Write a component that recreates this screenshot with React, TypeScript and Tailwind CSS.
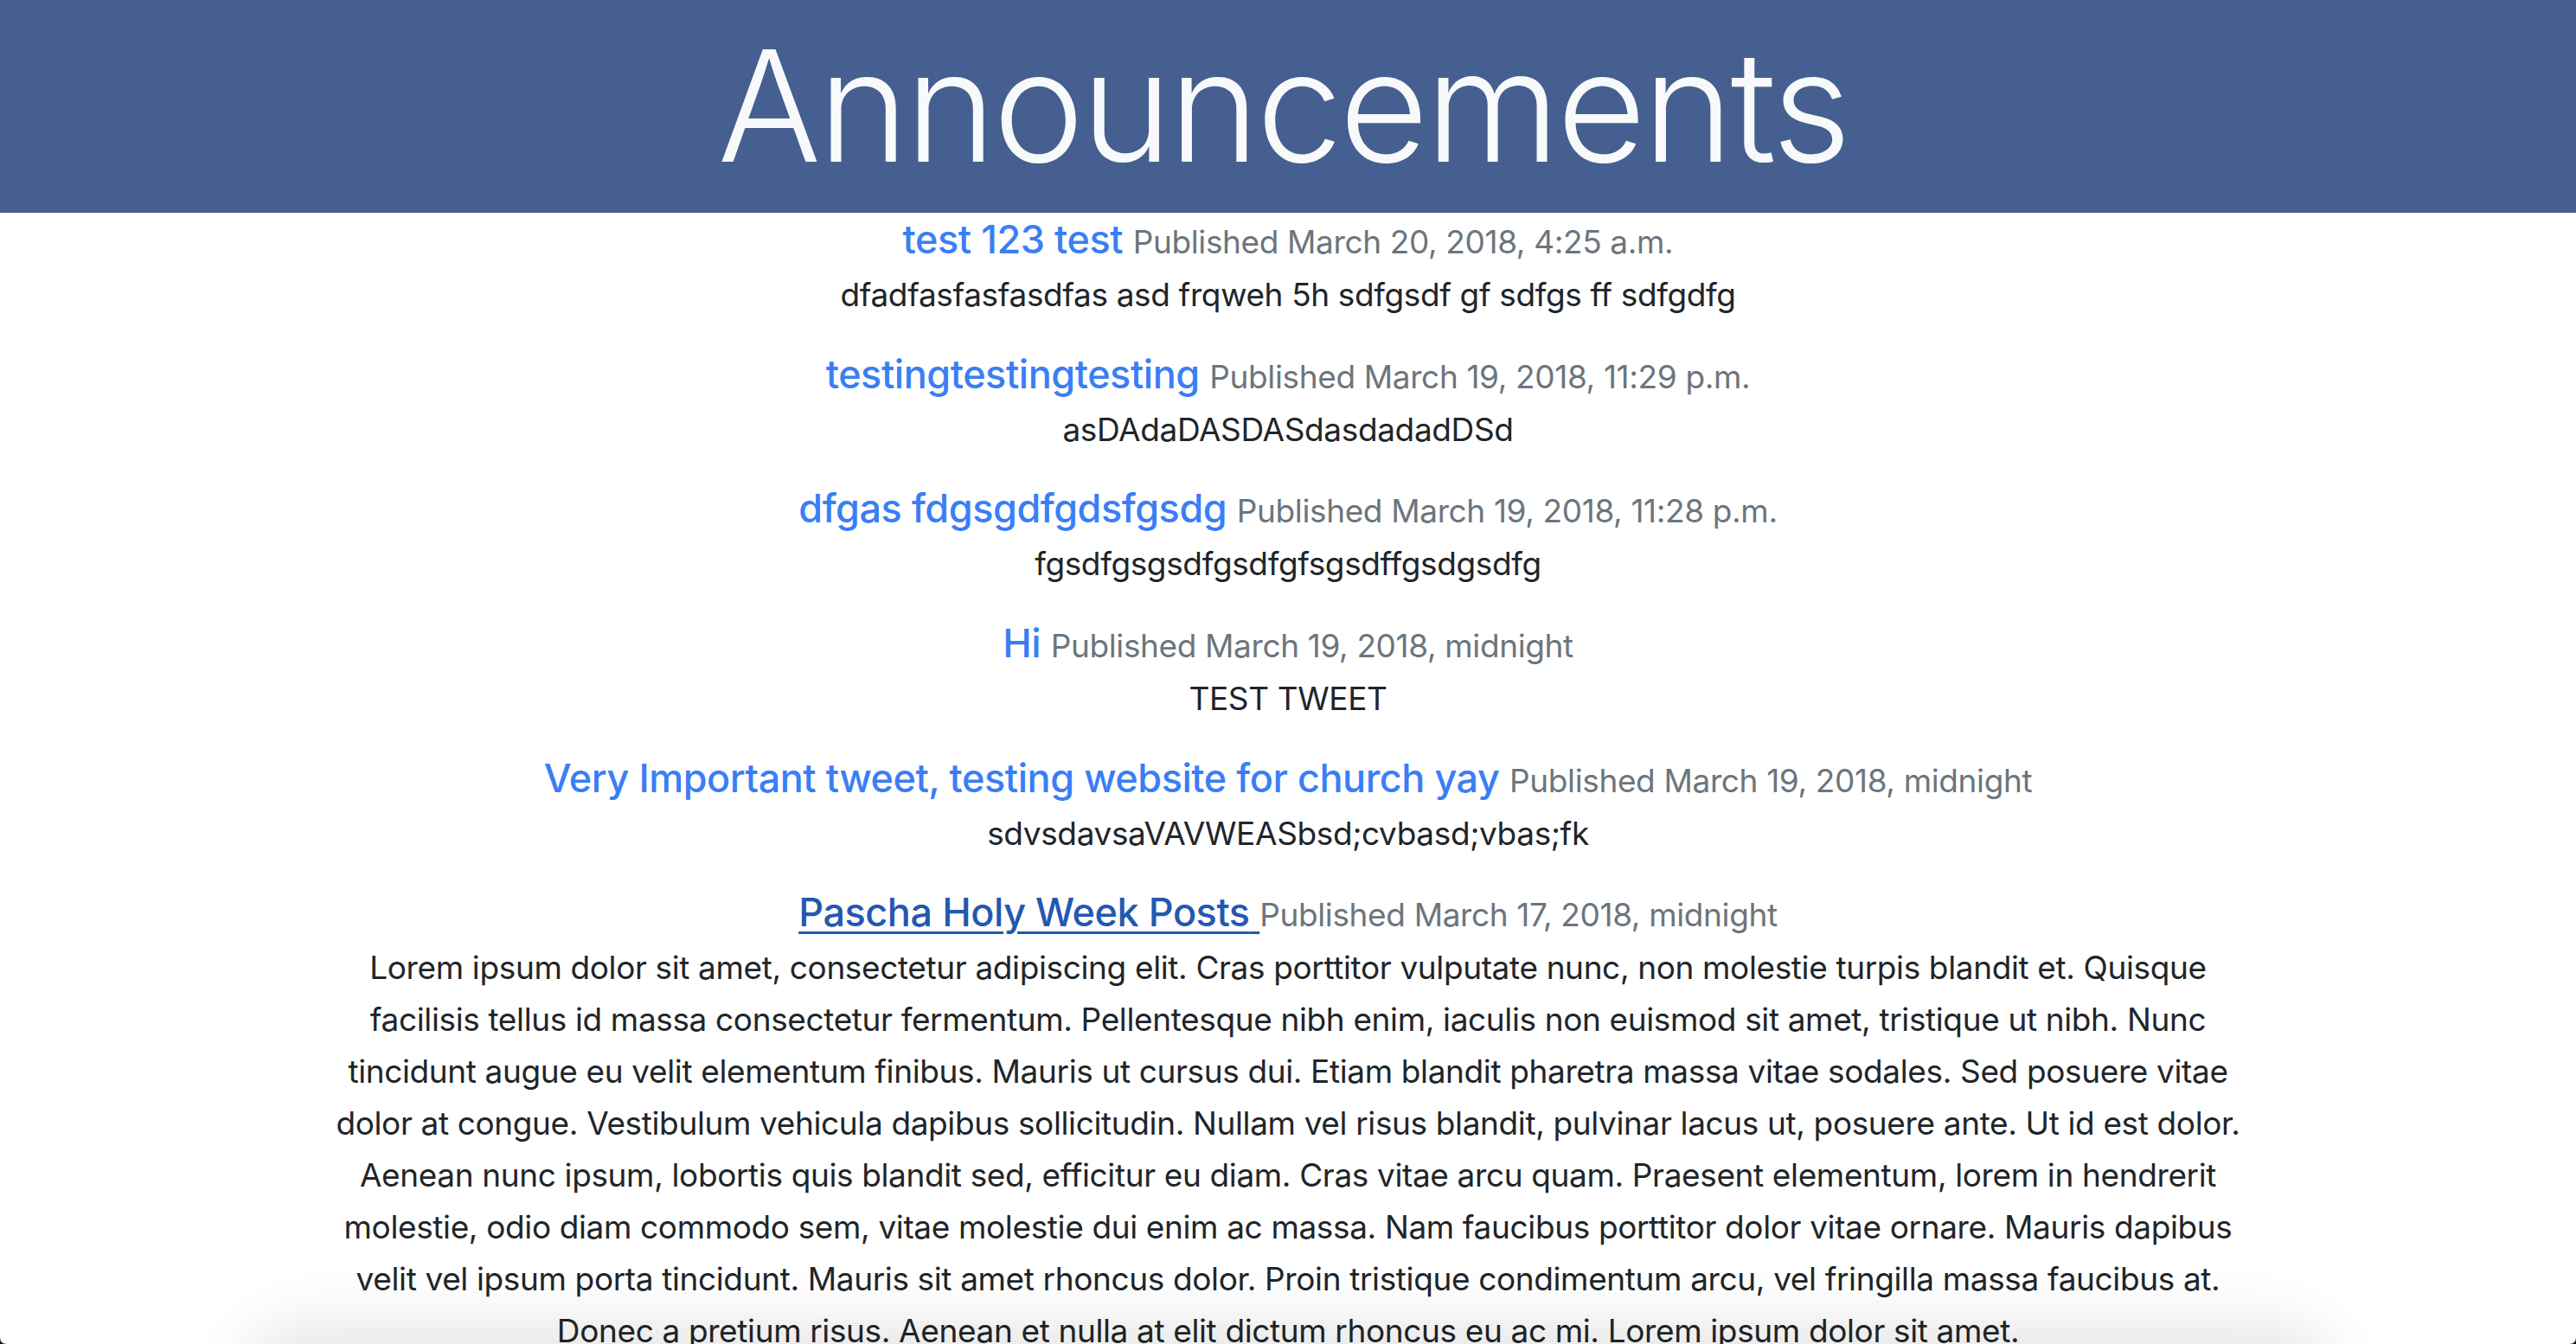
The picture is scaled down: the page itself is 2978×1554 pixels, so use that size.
import React from "react";

type Entry = { title: string; date: string; body: string[]; hover?: boolean };

const entries: Entry[] = [
  { title: "test 123 test", date: "Published March 20, 2018, 4:25 a.m.", body: ["dfadfasfasfasdfas asd frqweh 5h sdfgsdf gf sdfgs ff sdfgdfg"] },
  { title: "testingtestingtesting", date: "Published March 19, 2018, 11:29 p.m.", body: ["asDAdaDASDASdasdadadDSd"] },
  { title: "dfgas fdgsgdfgdsfgsdg", date: "Published March 19, 2018, 11:28 p.m.", body: ["fgsdfgsgsdfgsdfgfsgsdffgsdgsdfg"] },
  { title: "Hi", date: "Published March 19, 2018, midnight", body: ["TEST TWEET"] },
  { title: "Very Important tweet, testing website for church yay", date: "Published March 19, 2018, midnight", body: ["sdvsdavsaVAVWEASbsd;cvbasd;vbas;fk"] },
  {
    title: "Pascha Holy Week Posts",
    date: "Published March 17, 2018, midnight",
    hover: true,
    body: [
      "Lorem ipsum dolor sit amet, consectetur adipiscing elit. Cras porttitor vulputate nunc, non molestie turpis blandit et. Quisque",
      "facilisis tellus id massa consectetur fermentum. Pellentesque nibh enim, iaculis non euismod sit amet, tristique ut nibh. Nunc",
      "tincidunt augue eu velit elementum finibus. Mauris ut cursus dui. Etiam blandit pharetra massa vitae sodales. Sed posuere vitae",
      "dolor at congue. Vestibulum vehicula dapibus sollicitudin. Nullam vel risus blandit, pulvinar lacus ut, posuere ante. Ut id est dolor.",
      "Aenean nunc ipsum, lobortis quis blandit sed, efficitur eu diam. Cras vitae arcu quam. Praesent elementum, lorem in hendrerit",
      "molestie, odio diam commodo sem, vitae molestie dui enim ac massa. Nam faucibus porttitor dolor vitae ornare. Mauris dapibus",
      "velit vel ipsum porta tincidunt. Mauris sit amet rhoncus dolor. Proin tristique condimentum arcu, vel fringilla massa faucibus at.",
      "Donec a pretium risus. Aenean et nulla at elit dictum rhoncus eu ac mi. Lorem ipsum dolor sit amet.",
    ],
  },
];

export default function App() {
  return (
    <div className="relative min-h-[1554px] bg-white font-['Inter','Noto_Sans',sans-serif] text-[#212529]">
      <header className="flex h-[246px] items-center justify-center bg-[#455f90]">
        <h1 className="mr-[12px] text-[178px] font-light leading-none tracking-[-0.02em] text-[#f8f9fa]">Announcements</h1>
      </header>
      <main className="mx-auto w-[2220px] pt-[2px] text-center">
        {entries.map((e) => (
          <section key={e.title}>
            <h4 className="mb-[5px] h-[58px] whitespace-nowrap text-[45px] font-medium leading-[58px] tracking-[-0.01em]">
              <a
                href="#"
                className={
                  e.hover
                    ? "text-[#2458b0] underline decoration-[3px] underline-offset-[6px]"
                    : "text-[#3a7ef6]"
                }
              >
                {e.title}
                {e.hover ? " " : ""}
              </a>
              {e.hover ? "" : " "}
              <small className="text-[37px] font-normal leading-none tracking-[-0.01em] text-[#6c757d]">{e.date}</small>
            </h4>
            <p className="mb-[32.7px] text-[37px] leading-[60px] tracking-[-0.01em]">
              {e.body.map((line) => (
                <span key={line} className="block whitespace-nowrap">
                  {line}
                </span>
              ))}
            </p>
          </section>
        ))}
      </main>
      <div className="pointer-events-none fixed left-[300px] right-[300px] top-full h-[120px] rounded-[60px] shadow-[0_0_70px_25px_rgba(0,0,0,0.10)]" />
      <svg className="pointer-events-none fixed bottom-0 left-0 h-[8px] w-[8px]" viewBox="0 0 8 8">
        <path d="M0 0 Q0 8 8 8 L0 8 Z" fill="#1a1a1a" />
      </svg>
      <svg className="pointer-events-none fixed bottom-0 right-0 h-[8px] w-[8px]" viewBox="0 0 8 8">
        <path d="M8 0 Q8 8 0 8 L8 8 Z" fill="#1a1a1a" />
      </svg>
    </div>
  );
}
